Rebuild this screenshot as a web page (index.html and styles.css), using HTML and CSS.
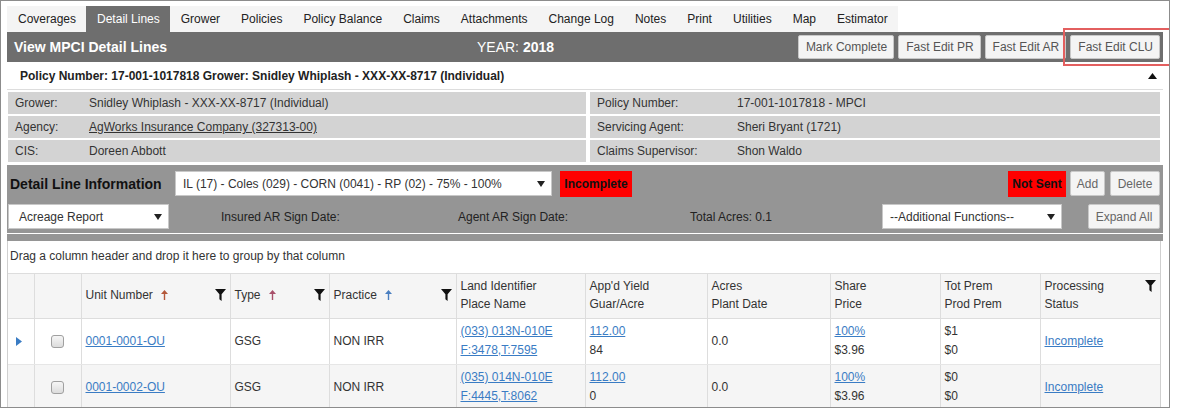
FILE: index.html
```html
<!DOCTYPE html>
<html lang="en">
<head>
    <meta name="viewport" content="width=device-width, initial-scale=1.0">
    <title>View MPCI Detail Lines</title>
    <link rel="stylesheet" href="styles.css">
</head>
<body>
    <div class="frame">
        <ul class="tabs">
            <li>Coverages</li>
            <li class="active">Detail Lines</li>
            <li>Grower</li>
            <li>Policies</li>
            <li>Policy Balance</li>
            <li>Claims</li>
            <li>Attachments</li>
            <li>Change Log</li>
            <li>Notes</li>
            <li>Print</li>
            <li>Utilities</li>
            <li>Map</li>
            <li>Estimator</li>
        </ul>

        <div class="page-head">
            <h1>View MPCI Detail Lines</h1>
            <div class="year">YEAR: <b>2018</b></div>
            <div class="head-buttons">
                <button class="btn">Mark Complete</button>
                <button class="btn">Fast Edit PR</button>
                <button class="btn">Fast Edit AR</button>
                <button class="btn">Fast Edit CLU</button>
            </div>
        </div>

        <div class="policy-line">
            <span>Policy Number: 17-001-1017818 Grower: Snidley Whiplash - XXX-XX-8717 (Individual)</span>
            <svg class="collapse" width="9" height="6" viewBox="0 0 9 6"><path d="M0 6 L4.5 0 L9 6 Z" fill="#111"/></svg>
        </div>

        <div class="info">
            <div class="info-col left">
                <div class="info-row"><span class="label">Grower:</span><span>Snidley Whiplash - XXX-XX-8717 (Individual)</span></div>
                <div class="info-row"><span class="label">Agency:</span><a href="#">AgWorks Insurance Company (327313-00)</a></div>
                <div class="info-row"><span class="label">CIS:</span><span>Doreen Abbott</span></div>
            </div>
            <div class="info-col right">
                <div class="info-row"><span class="label">Policy Number:</span><span>17-001-1017818 - MPCI</span></div>
                <div class="info-row"><span class="label">Servicing Agent:</span><span>Sheri Bryant (1721)</span></div>
                <div class="info-row"><span class="label">Claims Supervisor:</span><span>Shon Waldo</span></div>
            </div>
        </div>

        <div class="detail">
            <div class="detail-row top">
                <h2>Detail Line Information</h2>
                <div class="select line-select">
                    <span>IL (17) - Coles (029) - CORN (0041) - RP (02) - 75% - 100%</span>
                    <svg width="8" height="6" viewBox="0 0 8 6"><path d="M0 0 H8 L4 6 Z" fill="#222"/></svg>
                </div>
                <span class="flag incomplete">Incomplete</span>
                <span class="flag not-sent">Not Sent</span>
                <button class="btn small add">Add</button>
                <button class="btn small delete">Delete</button>
            </div>
            <div class="detail-row bottom">
                <div class="select report-select">
                    <span>Acreage Report</span>
                    <svg width="8" height="6" viewBox="0 0 8 6"><path d="M0 0 H8 L4 6 Z" fill="#222"/></svg>
                </div>
                <span class="meta insured">Insured AR Sign Date:</span>
                <span class="meta agent">Agent AR Sign Date:</span>
                <span class="meta acres">Total Acres: 0.1</span>
                <div class="select functions-select">
                    <span>--Additional Functions--</span>
                    <svg width="8" height="6" viewBox="0 0 8 6"><path d="M0 0 H8 L4 6 Z" fill="#222"/></svg>
                </div>
                <button class="btn small expand">Expand All</button>
            </div>
        </div>
        <div class="detail-foot"></div>

        <div class="grid">
            <div class="group-panel">Drag a column header and drop it here to group by that column</div>
            <table class="lines">
                <thead>
                    <tr>
                        <th class="c-exp"></th>
                        <th class="c-chk"></th>
                        <th class="c-unit">
                            <div class="th-inner">
                                <span>Unit Number</span>
                                <svg class="sort" width="7" height="10" viewBox="0 0 7 10"><path d="M3.5 0 L7 4 H4.2 V10 H2.8 V4 H0 Z" fill="#b4583a"/></svg>
                                <svg class="filter" width="11" height="12" viewBox="0 0 11 12"><path d="M0 0 H11 L6.6 5.2 V12 L4.4 10.2 V5.2 Z" fill="#111"/></svg>
                            </div>
                        </th>
                        <th class="c-type">
                            <div class="th-inner">
                                <span>Type</span>
                                <svg class="sort" width="7" height="10" viewBox="0 0 7 10"><path d="M3.5 0 L7 4 H4.2 V10 H2.8 V4 H0 Z" fill="#a8506a"/></svg>
                                <svg class="filter" width="11" height="12" viewBox="0 0 11 12"><path d="M0 0 H11 L6.6 5.2 V12 L4.4 10.2 V5.2 Z" fill="#111"/></svg>
                            </div>
                        </th>
                        <th class="c-prac">
                            <div class="th-inner">
                                <span>Practice</span>
                                <svg class="sort" width="7" height="10" viewBox="0 0 7 10"><path d="M3.5 0 L7 4 H4.2 V10 H2.8 V4 H0 Z" fill="#4a7fc0"/></svg>
                                <svg class="filter" width="11" height="12" viewBox="0 0 11 12"><path d="M0 0 H11 L6.6 5.2 V12 L4.4 10.2 V5.2 Z" fill="#111"/></svg>
                            </div>
                        </th>
                        <th class="c-land">Land Identifier<br>Place Name</th>
                        <th class="c-yield">App'd Yield<br>Guar/Acre</th>
                        <th class="c-acres">Acres<br>Plant Date</th>
                        <th class="c-share">Share<br>Price</th>
                        <th class="c-prem">Tot Prem<br>Prod Prem</th>
                        <th class="c-status">
                            <div class="th-inner top">
                                <span>Processing<br>Status</span>
                                <svg class="filter" width="11" height="12" viewBox="0 0 11 12"><path d="M0 0 H11 L6.6 5.2 V12 L4.4 10.2 V5.2 Z" fill="#111"/></svg>
                            </div>
                        </th>
                    </tr>
                </thead>
                <tbody>
                    <tr>
                        <td class="expander"><svg width="6" height="9" viewBox="0 0 6 9"><path d="M0 0 L6 4.5 L0 9 Z" fill="#3a7cc4"/></svg></td>
                        <td class="check"><span class="checkbox"></span></td>
                        <td><a href="#">0001-0001-OU</a></td>
                        <td>GSG</td>
                        <td>NON IRR</td>
                        <td><a href="#">(033) 013N-010E</a><br><a href="#">F:3478,T:7595</a></td>
                        <td><a href="#">112.00</a><br>84</td>
                        <td>0.0</td>
                        <td><a href="#">100%</a><br>$3.96</td>
                        <td>$1<br>$0</td>
                        <td><a href="#">Incomplete</a></td>
                    </tr>
                    <tr class="alt">
                        <td class="expander"></td>
                        <td class="check"><span class="checkbox"></span></td>
                        <td><a href="#">0001-0002-OU</a></td>
                        <td>GSG</td>
                        <td>NON IRR</td>
                        <td><a href="#">(035) 014N-010E</a><br><a href="#">F:4445,T:8062</a></td>
                        <td><a href="#">112.00</a><br>0</td>
                        <td>0.0</td>
                        <td><a href="#">100%</a><br>$3.96</td>
                        <td>$0<br>$0</td>
                        <td><a href="#">Incomplete</a></td>
                    </tr>
                </tbody>
            </table>
        </div>

        <div class="highlight"></div>
    </div>
</body>
</html>
```

FILE: styles.css
```css
* {
    box-sizing: border-box;
}
body {
    margin: 0;
    font-family: "Liberation Sans", Arial, sans-serif;
    font-size: 12px;
    color: #333;
    background: #fff;
}
a {
    color: #3a7cc4;
}
.frame {
    position: relative;
    width: 1170px;
    height: 408px;
    border: 1px solid #8c8c8c;
    padding: 5px 6px 0 6px;
    overflow: hidden;
}

/* tabs */
.tabs {
    display: inline-flex;
    list-style: none;
    margin: 0;
    padding: 0;
    background: #f4f4f4;
}
.tabs li {
    padding: 0 10px 0 11px;
    height: 26px;
    line-height: 26px;
    font-size: 12px;
    color: #222;
}
.tabs li.active {
    background: #6e6e6e;
    color: #fff;
}

/* page header */
.page-head {
    display: flex;
    align-items: center;
    height: 30px;
    padding: 0 3px 0 7px;
    background: #6e6e6e;
    color: #fff;
}
.page-head h1 {
    width: 463px;
    margin: 0;
    font-size: 14px;
}
.year {
    font-size: 14px;
}
.head-buttons {
    display: flex;
    gap: 4px;
    margin-left: auto;
}
.btn {
    height: 24px;
    padding: 0 6px 0 7px;
    border: 1px solid #c8c8c8;
    border-radius: 2px;
    background: #f4f4f4;
    font-family: "Liberation Sans", Arial, sans-serif;
    font-size: 12px;
    color: #555;
}

.policy-line {
    display: flex;
    align-items: center;
    height: 28px;
    padding: 0 6px 0 13px;
    border-bottom: 1px solid #ddd;
    font-weight: bold;
    color: #222;
}
.collapse {
    margin-left: auto;
}

/* info block */
.info {
    display: grid;
    grid-template-columns: 578px 570px;
    gap: 4px;
    padding: 2px 3px 3px 1px;
}
.info-col {
    display: flex;
    flex-direction: column;
    gap: 2px;
}
.info-row {
    display: flex;
    align-items: center;
    height: 22px;
    background: #d3d3d3;
    color: #333;
}
.left .label {
    width: 81px;
    padding-left: 7px;
}
.right .label {
    width: 147px;
    padding-left: 7px;
}
.info-row a {
    color: #333;
}

/* detail line information */
.detail {
    padding: 5px 3px 4px 1px;
    background: #959595;
}
.detail-row {
    display: flex;
    align-items: center;
}
.detail-row.top {
    height: 27px;
}
.detail-row.bottom {
    height: 25px;
    margin-top: 7px;
}
.detail h2 {
    width: 165px;
    margin: 0 0 0 2px;
    font-size: 14px;
    color: #111;
}
.select {
    display: flex;
    align-items: center;
    justify-content: space-between;
    height: 25px;
    padding: 0 6px 0 7px;
    border: 1px solid #c8c8c8;
    background: #fff;
    font-size: 12px;
    color: #333;
}
.line-select {
    width: 377px;
}
.report-select {
    width: 161px;
    padding-left: 10px;
}
.functions-select {
    width: 180px;
}
.flag {
    height: 26px;
    line-height: 26px;
    background: #ff0000;
    font-size: 12px;
    font-weight: bold;
    color: #111;
    text-align: center;
}
.incomplete {
    width: 72px;
    margin-left: 8px;
}
.not-sent {
    width: 58px;
    margin-left: auto;
}
.btn.small {
    height: 25px;
    color: #666;
}
.add {
    width: 35px;
    margin-left: 4px;
    padding: 0;
}
.delete {
    width: 50px;
    margin-left: 5px;
    padding: 0;
}
.meta {
    font-size: 12px;
    color: #222;
}
.insured {
    width: 237px;
    margin-left: 52px;
}
.agent {
    width: 232px;
}
.acres {
    width: 192px;
}
.expand {
    width: 72px;
    margin-left: auto;
    padding: 0;
}
.detail-foot {
    height: 8px;
    border-top: 1px solid #fff;
    background: #959595;
}

/* grid */
.grid {
    margin-right: 2px;
    border: 1px solid #d0d0d0;
    border-top: 0;
}
.group-panel {
    height: 33px;
    line-height: 31px;
    padding-left: 2px;
    border-bottom: 1px solid #ddd;
    background: #fff;
}
.lines {
    width: 1152px;
    table-layout: fixed;
    border-collapse: collapse;
}
.lines th,
.lines td {
    border-left: 1px solid #ddd;
    padding: 0 4px;
    text-align: left;
    vertical-align: middle;
}
.lines th:first-child,
.lines td:first-child {
    border-left: 0;
}
.lines th {
    height: 44px;
    padding-top: 2px;
    padding-bottom: 3px;
    line-height: 18px;
    font-weight: normal;
    background: #f5f5f5;
    border-bottom: 1px solid #ddd;
}
.lines td {
    height: 46px;
    line-height: 19px;
    border-bottom: 1px solid #e6e6e6;
}
.lines tr.alt td {
    background: #f5f5f5;
}
.c-exp { width: 26px; }
.c-chk { width: 47px; }
.c-unit { width: 149px; }
.c-type { width: 99px; }
.c-prac { width: 127px; }
.c-land { width: 129px; }
.c-yield { width: 122px; }
.c-acres { width: 123px; }
.c-share { width: 110px; }
.c-prem { width: 100px; }
.c-status { width: 120px; }
.th-inner {
    display: flex;
    align-items: center;
}
.th-inner.top {
    align-items: flex-start;
}
.th-inner.top .filter {
    margin-top: 3px;
}
.sort {
    margin-left: 8px;
}
.filter {
    margin-left: auto;
}
.expander {
    text-align: center;
    padding-left: 6px;
}
.expander svg {
    display: block;
    margin-left: 4px;
}
.lines td.check {
    text-align: center;
}
.checkbox {
    display: inline-block;
    width: 13px;
    height: 13px;
    vertical-align: middle;
    border: 1px solid #a0a0a0;
    border-radius: 3px;
    background: linear-gradient(#f6f6f6, #dcdcdc);
}

/* annotation */
.highlight {
    position: absolute;
    left: 1062px;
    top: 27px;
    width: 108px;
    height: 38px;
    border: 2px solid #e35f5f;
}
```
